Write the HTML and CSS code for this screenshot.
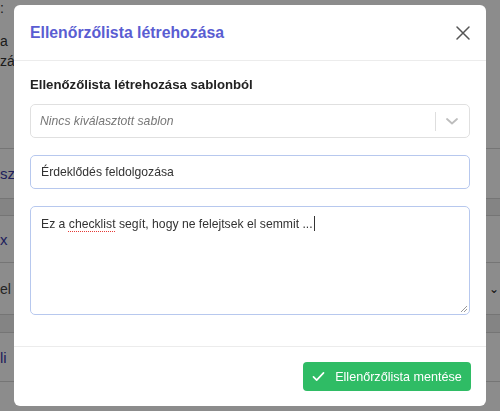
FILE: index.html
```html
<!DOCTYPE html>
<html lang="hu">
<head>
<meta charset="utf-8">
<title>Ellenőrzőlista létrehozása</title>
<link rel="stylesheet" href="styles.css">
</head>
<body>
<div class="page">
  <div class="pg-top"><span class="frag">:</span></div>
  <div class="pg-text">
    <div class="frag">a</div>
    <div class="frag">zá</div>
  </div>
  <div class="pg-row r1"><span class="frag link">sz</span></div>
  <div class="pg-band b1"></div>
  <div class="pg-row r2"><span class="frag link">x</span></div>
  <div class="pg-row r3"><span class="frag muted">el</span><span class="pg-chev">&#8964;</span></div>
  <div class="pg-band b2"></div>
  <div class="pg-row r4"><span class="frag link">li</span></div>
</div>

<div class="overlay"></div>

<div class="modal">
  <div class="modal-header">
    <h2 class="modal-title">Ellenőrzőlista létrehozása</h2>
    <svg class="close" width="16" height="16" viewBox="0 0 16 16">
      <path d="M2 2 L14 14 M14 2 L2 14" stroke="#555" stroke-width="1.5" fill="none" stroke-linecap="round"/>
    </svg>
  </div>
  <div class="modal-body">
    <div class="label">Ellenőzőlista létrehozása sablonból</div>
    <div class="select">
      <span class="placeholder">Nincs kiválasztott sablon</span>
      <span class="sep"></span>
      <svg class="chev" width="14" height="10" viewBox="0 0 14 10">
        <path d="M2 3 L7 7.5 L12 3" stroke="#bdbdbd" stroke-width="1.8" fill="none" stroke-linecap="round" stroke-linejoin="round"/>
      </svg>
    </div>
    <div class="input">Érdeklődés feldolgozása</div>
    <div class="textarea">
      <span>Ez a <span class="spell">checklist</span> segít, hogy ne felejtsek el semmit ...</span><span class="caret"></span>
      <svg class="grip" width="9" height="9" viewBox="0 0 9 9">
        <path d="M8 2 L2 8 M8 5 L5 8" stroke="#999" stroke-width="1" fill="none"/>
      </svg>
    </div>
  </div>
  <div class="modal-footer">
    <button class="btn-save">
      <svg class="check" width="13" height="11" viewBox="0 0 14 12">
        <path d="M1.5 6.5 L5 10 L12.5 2" stroke="#fff" stroke-width="1.8" fill="none" stroke-linecap="round" stroke-linejoin="round"/>
      </svg>
      <span>Ellenőrzőlista mentése</span>
    </button>
  </div>
</div>
</body>
</html>
```

FILE: styles.css
```css
* { box-sizing: border-box; }
html, body {
  margin: 0;
  padding: 0;
  width: 500px;
  height: 411px;
  overflow: hidden;
  font-family: "Liberation Sans", Arial, sans-serif;
  background: #fff;
}

/* underlying page */
.page {
  width: 500px;
  height: 411px;
  color: #333;
  font-size: 14px;
}
.frag {
  display: block;
  white-space: nowrap;
}
.pg-top { height: 30px; padding-top: 1px; line-height: 14px; }
.pg-text { height: 118px; line-height: 20px; padding-top: 1px; }
.pg-row {
  display: flex;
  align-items: center;
  justify-content: space-between;
  border-top: 1px solid #d6d6d6;
}
.r1 { height: 50px; }
.r2 { height: 47px; }
.r3 { height: 53px; border-bottom: 1px solid #d6d6d6; }
.r4 { height: 50px; border-bottom: 1px solid #d6d6d6; }
.pg-band { background: #f0f0f0; }
.b1 { height: 17px; border-top: 1px solid #d6d6d6; }
.b2 { height: 17px; }
.link { color: #3a3aa8; font-size: 15px; }
.muted { color: #444; font-size: 14px; }
.pg-chev { color: #222; font-size: 12px; margin-right: 1px; }

.overlay {
  position: fixed;
  inset: 0;
  background: rgba(0, 0, 0, 0.45);
}

/* modal */
.modal {
  position: fixed;
  left: 14px;
  top: 5px;
  width: 472px;
  height: 401px;
  background: #fff;
  border-radius: 6px;
  display: flex;
  flex-direction: column;
}
.modal-header {
  height: 56px;
  padding: 0 16px;
  display: flex;
  align-items: center;
  justify-content: space-between;
  border-bottom: 1px solid #ececec;
}
.modal-title {
  margin: 0;
  font-size: 15.8px;
  font-weight: 600;
  color: #5a5dd2;
}
.close { margin-right: -1px; }

.modal-body {
  padding: 14px 16px 31px;
  display: flex;
  flex-direction: column;
}
.label {
  font-size: 13.2px;
  font-weight: 700;
  color: #222;
  line-height: 20px;
  margin-bottom: 9px;
}
.select {
  height: 34px;
  border: 1px solid #e0e0e0;
  border-radius: 5px;
  display: flex;
  align-items: center;
  padding-left: 9px;
  margin-bottom: 17px;
}
.placeholder {
  flex: 1;
  font-style: italic;
  color: #777;
  font-size: 12.2px;
}
.sep {
  width: 1px;
  height: 19px;
  background: #dedede;
}
.chev { margin: 0 10px 0 9px; }

.input {
  height: 34px;
  border: 1px solid #b7c8ee;
  border-radius: 5px;
  display: flex;
  align-items: center;
  padding-left: 10px;
  font-size: 12.2px;
  color: #333;
  margin-bottom: 17px;
}
.textarea {
  position: relative;
  height: 109px;
  border: 1px solid #b7c8ee;
  border-radius: 5px;
  padding: 9px 10px;
  font-size: 12.2px;
  color: #333;
  line-height: 16px;
}
.spell {
  text-decoration: underline dotted #e53935;
  text-decoration-thickness: 1px;
  text-underline-offset: 3px;
}
.caret {
  display: inline-block;
  width: 1px;
  height: 15px;
  background: #333;
  vertical-align: -3px;
  margin-left: 1px;
}
.grip {
  position: absolute;
  right: 1px;
  bottom: 1px;
}

.modal-footer {
  flex: 1;
  border-top: 1px solid #ececec;
  display: flex;
  align-items: center;
  justify-content: flex-end;
  padding: 0 15px;
}
.btn-save {
  height: 29px;
  width: 168px;
  background: #2fbc65;
  border: none;
  border-radius: 4px;
  color: #fff;
  font-family: "Liberation Sans", Arial, sans-serif;
  font-size: 12.6px;
  white-space: nowrap;
  display: flex;
  align-items: center;
  justify-content: center;
  gap: 10px;
  padding: 0 6px;
}
```
